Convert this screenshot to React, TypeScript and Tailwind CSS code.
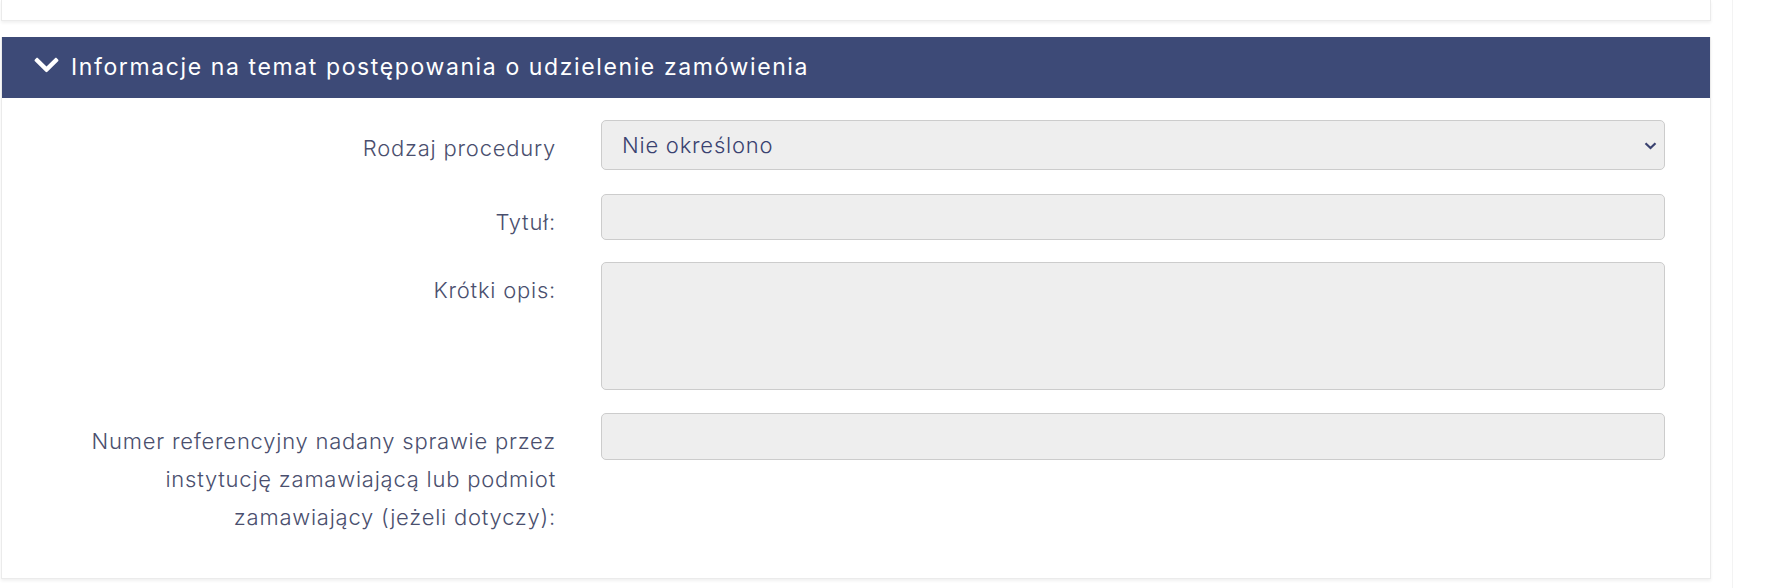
import { useState } from "react";

const ChevronDown = () => (
  <svg viewBox="0 0 448 512" className="w-[25px] h-[28px] fill-white">
    <path d="M207.029 381.476L12.686 187.132c-9.373-9.373-9.373-24.569 0-33.941l22.667-22.667c9.357-9.357 24.522-9.375 33.901-.04L224 284.505l154.745-154.021c9.379-9.335 24.544-9.317 33.901.04l22.667 22.667c9.373 9.373 9.373 24.569 0 33.941L240.971 381.476c-9.373 9.372-24.569 9.372-33.942 0z" />
  </svg>
);

const Label = ({ children }: { children: React.ReactNode }) => (
  <label className="w-[554px] shrink-0 text-right pt-[9px] leading-[38px] text-[22px] font-light text-[#4a4f6e] tracking-[0.035em]">
    {children}
  </label>
);

const inputClass =
  "w-full bg-[#eeeeee] border border-[#cccccc] rounded-[5px] px-5 text-[22px] font-light tracking-[0.035em] text-[#3a4270] outline-none";

export default function App() {
  const [procedure, setProcedure] = useState("none");
  const [title, setTitle] = useState("");
  const [desc, setDesc] = useState("");
  const [refNo, setRefNo] = useState("");

  return (
    <div className="flex min-h-[588px] bg-white font-['Inter',sans-serif]">
      <div className="w-[1711px] pl-px">
        <div className="h-[21px] border-x border-b border-[#ebebeb] shadow-[0_2px_3px_rgba(0,0,0,0.06)]" />

        <section className="mt-[16px] border-x border-b border-[#ebebeb] shadow-[0_2px_3px_rgba(0,0,0,0.06)]">
          <div className="h-[61px] bg-[#3d4a77] flex items-center pl-[32px] text-white">
            <span className="-mt-[6px]">
              <ChevronDown />
            </span>
            <h2 className="ml-[12px] text-[23px] font-normal tracking-[0.07em]">
              Informacje na temat postępowania o udzielenie zamówienia
            </h2>
          </div>

          <div className="pt-[22px] pb-[42px] pr-[45px]">
            <div className="flex gap-[45px]">
              <Label>Rodzaj procedury</Label>
              <div className="relative flex-1">
                <select
                  value={procedure}
                  onChange={(e) => setProcedure(e.target.value)}
                  className={inputClass + " h-[50px] appearance-none"}
                >
                  <option value="none">Nie określono</option>
                  <option value="open">Procedura otwarta</option>
                  <option value="restricted">Procedura ograniczona</option>
                </select>
                <svg
                  viewBox="0 0 12 8"
                  className="absolute right-[8px] top-[22px] w-[13px] h-[8px] pointer-events-none"
                >
                  <path d="M1 1.2l5 4.8 5-4.8" fill="none" stroke="#3a4270" strokeWidth="2.2" />
                </svg>
              </div>
            </div>

            <div className="flex gap-[45px] mt-[24px]">
              <Label>Tytuł:</Label>
              <input
                value={title}
                onChange={(e) => setTitle(e.target.value)}
                className={inputClass + " h-[46px] flex-1"}
              />
            </div>

            <div className="flex gap-[45px] mt-[21px]">
              <Label>Krótki opis:</Label>
              <textarea
                value={desc}
                onChange={(e) => setDesc(e.target.value)}
                className={inputClass + " h-[128px] flex-1 resize-none py-2"}
              />
            </div>

            <div className="flex gap-[45px] mt-[23px]">
              <Label>
                Numer referencyjny nadany sprawie przez
                <br />
                instytucję zamawiającą lub podmiot
                <br />
                zamawiający (jeżeli dotyczy):
              </Label>
              <input
                value={refNo}
                onChange={(e) => setRefNo(e.target.value)}
                className={inputClass + " h-[47px] flex-1"}
              />
            </div>
          </div>
        </section>
      </div>
      <div className="ml-[21px] border-l border-[#f3f3f3]" />
    </div>
  );
}
